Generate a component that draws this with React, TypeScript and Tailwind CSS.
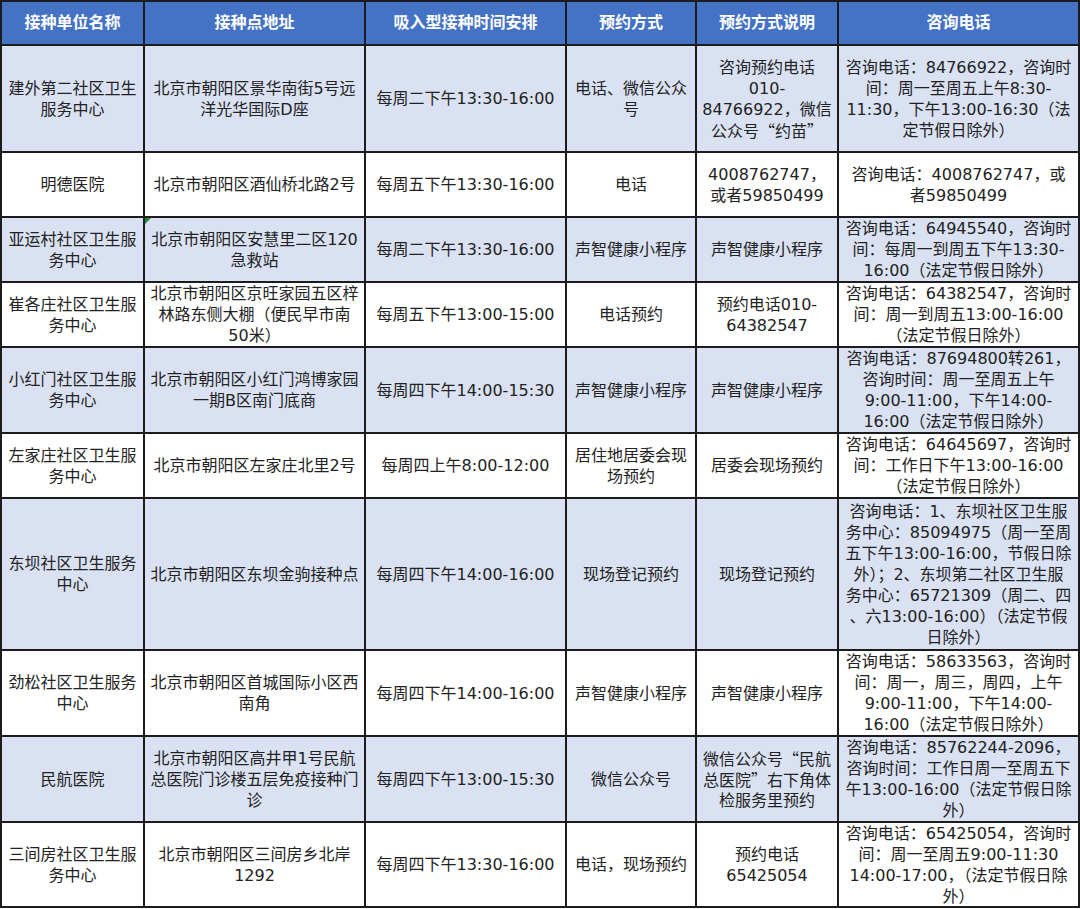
const headers = [
  "接种单位名称",
  "接种点地址",
  "吸入型接种时间安排",
  "预约方式",
  "预约方式说明",
  "咨询电话",
];

// each cell keeps the line breaks of the printed sheet
const rows: string[][] = [
  [
    "建外第二社区卫生\n服务中心",
    "北京市朝阳区景华南街5号远\n洋光华国际D座",
    "每周二下午13:30-16:00",
    "电话、微信公众\n号",
    "咨询预约电话\n010-\n84766922，微信\n公众号“约苗”",
    "咨询电话：84766922，咨询时\n间：周一至周五上午8:30-\n11:30，下午13:00-16:30（法\n定节假日除外）",
  ],
  [
    "明德医院",
    "北京市朝阳区酒仙桥北路2号",
    "每周五下午13:30-16:00",
    "电话",
    "4008762747，\n或者59850499",
    "咨询电话：4008762747，或\n者59850499",
  ],
  [
    "亚运村社区卫生服\n务中心",
    "北京市朝阳区安慧里二区120\n急救站",
    "每周二下午13:30-16:00",
    "声智健康小程序",
    "声智健康小程序",
    "咨询电话：64945540，咨询时\n间：每周一到周五下午13:30-\n16:00（法定节假日除外）",
  ],
  [
    "崔各庄社区卫生服\n务中心",
    "北京市朝阳区京旺家园五区梓\n林路东侧大棚（便民早市南\n50米）",
    "每周五下午13:00-15:00",
    "电话预约",
    "预约电话010-\n64382547",
    "咨询电话：64382547，咨询时\n间：周一到周五13:00-16:00\n（法定节假日除外）",
  ],
  [
    "小红门社区卫生服\n务中心",
    "北京市朝阳区小红门鸿博家园\n一期B区南门底商",
    "每周四下午14:00-15:30",
    "声智健康小程序",
    "声智健康小程序",
    "咨询电话：87694800转261，\n咨询时间：周一至周五上午\n9:00-11:00，下午14:00-\n16:00（法定节假日除外）",
  ],
  [
    "左家庄社区卫生服\n务中心",
    "北京市朝阳区左家庄北里2号",
    "每周四上午8:00-12:00",
    "居住地居委会现\n场预约",
    "居委会现场预约",
    "咨询电话：64645697，咨询时\n间：工作日下午13:00-16:00\n（法定节假日除外）",
  ],
  [
    "东坝社区卫生服务\n中心",
    "北京市朝阳区东坝金驹接种点",
    "每周四下午14:00-16:00",
    "现场登记预约",
    "现场登记预约",
    "咨询电话：1、东坝社区卫生服\n务中心：85094975（周一至周\n五下午13:00-16:00，节假日除\n外）；2、东坝第二社区卫生服\n务中心：65721309（周二、四\n、六13:00-16:00）（法定节假\n日除外）",
  ],
  [
    "劲松社区卫生服务\n中心",
    "北京市朝阳区首城国际小区西\n南角",
    "每周四下午14:00-16:00",
    "声智健康小程序",
    "声智健康小程序",
    "咨询电话：58633563，咨询时\n间：周一，周三，周四，上午\n9:00-11:00，下午14:00-\n16:00（法定节假日除外）",
  ],
  [
    "民航医院",
    "北京市朝阳区高井甲1号民航\n总医院门诊楼五层免疫接种门\n诊",
    "每周四下午13:00-15:30",
    "微信公众号",
    "微信公众号“民航\n总医院”右下角体\n检服务里预约",
    "咨询电话：85762244-2096，\n咨询时间：工作日周一至周五下\n午13:00-16:00（法定节假日除\n外）",
  ],
  [
    "三间房社区卫生服\n务中心",
    "北京市朝阳区三间房乡北岸\n1292",
    "每周四下午13:30-16:00",
    "电话，现场预约",
    "预约电话\n65425054",
    "咨询电话：65425054，咨询时\n间：周一至周五9:00-11:30\n14:00-17:00，（法定节假日除\n外）",
  ],
];

// curly quotes should come out full width like the rest of the CJK text
function Line({ text }: { text: string }) {
  const parts = text.split(/([“”])/);
  return (
    <div className="h-[21px] whitespace-nowrap">
      {parts.map((p, k) =>
        p === "“" || p === "”" ? (
          <span key={k} className="font-['Noto_Sans_CJK_SC',sans-serif]">
            {p}
          </span>
        ) : (
          p
        )
      )}
    </div>
  );
}

export default function App() {
  return (
    <div className="w-[1080px] h-[909px] bg-white font-['DejaVu_Sans','Noto_Sans_CJK_SC',sans-serif]">
      <div className="grid w-[1080px] grid-cols-[141px_219px_199px_128px_140px_239px] grid-rows-[42px_105px_63px_63px_63px_84px_63px_150px_84px_84px_83px] gap-[2px] bg-[#1c1c1c] p-[2px]">
        {headers.map((h) => (
          <div
            key={h}
            className="flex items-center justify-center bg-[#4472c4] text-[16px] font-semibold text-white"
          >
            {h}
          </div>
        ))}
        {rows.map((row, i) =>
          row.map((cell, j) => (
            <div
              key={i + "-" + j}
              className={
                "relative flex flex-col items-center justify-center text-center text-[16px] leading-[21px] text-[#222] " +
                (i % 2 === 0 ? "bg-[#d9e1f2]" : "bg-white")
              }
            >
              {i === 2 && j === 1 && (
                <span className="absolute left-0 top-0 h-0 w-0 border-t-[6px] border-r-[6px] border-t-[#1e8a3a] border-r-transparent" />
              )}
              {cell.split("\n").map((line, k) => (
                <Line key={k} text={line} />
              ))}
            </div>
          ))
        )}
      </div>
    </div>
  );
}
